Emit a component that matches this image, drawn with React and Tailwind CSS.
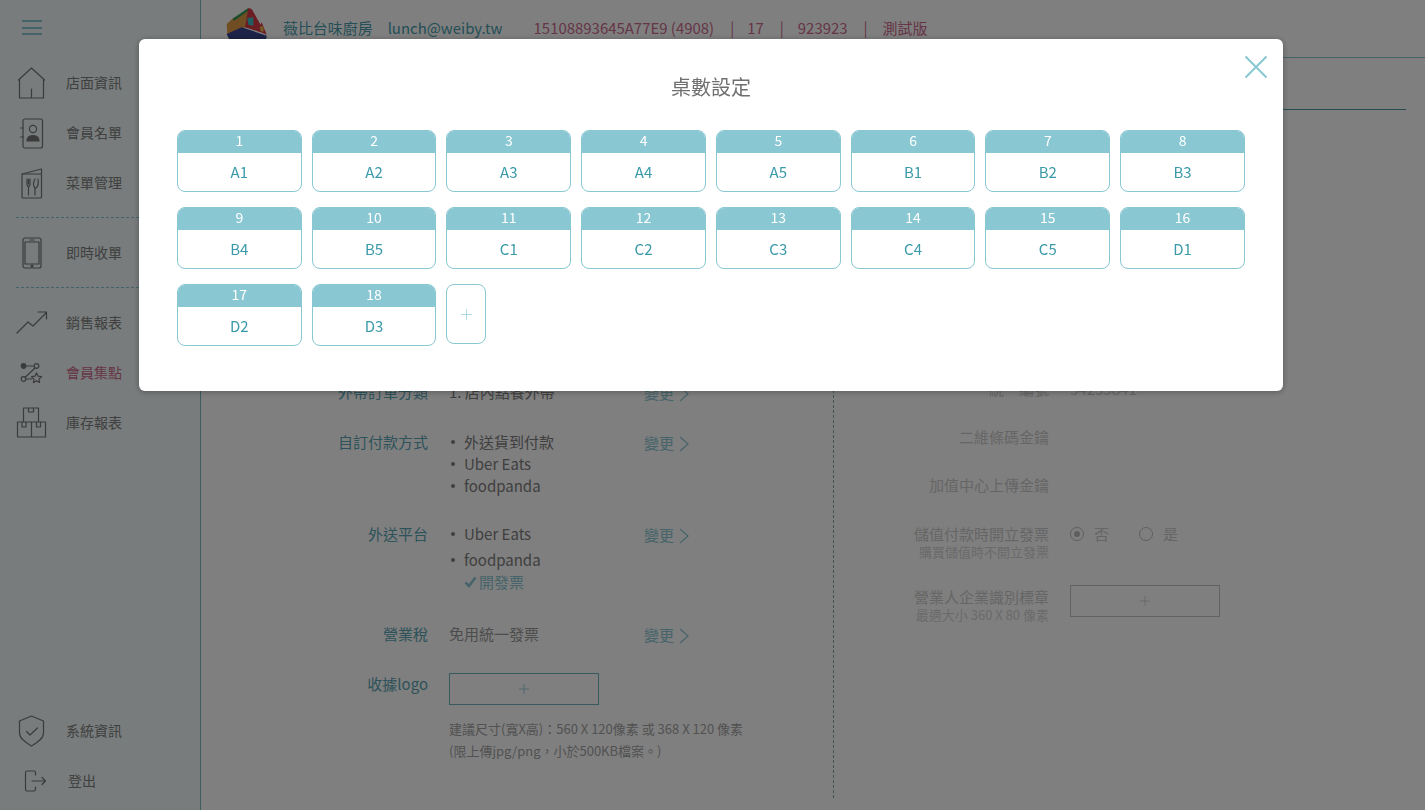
import { Plus } from "lucide-react";

const tables = ["A1","A2","A3","A4","A5","B1","B2","B3","B4","B5","C1","C2","C3","C4","C5","D1","D2","D3"];

const Svg = ({ w = 32, h = 32, children }) => (
  <svg width={w} height={h} viewBox={`0 0 ${w} ${h}`} fill="none" stroke="#777" strokeWidth="1.2" strokeLinejoin="round" strokeLinecap="round">
    {children}
  </svg>
);

const HomeIcon = () => (
  <Svg>
    <path d="M2.500 13 15.500 1l13 12M3.500 12v19h24V12M15.500 31v-9" />
  </Svg>
);
const ContactIcon = () => (
  <Svg>
    <rect x="7" y="2" width="19.500" height="29" rx="2" />
    <path d="M4.500 11h3M4.500 20h3" />
    <circle cx="17" cy="12" r="3.600" />
    <path d="M11 24c0-4 3-5.500 6-5.500s6 1.500 6 5.500z" fill="#777" />
  </Svg>
);
const MenuIcon = () => (
  <Svg>
    <path d="M6 7 25.500 2v5" />
    <rect x="6" y="7" width="19.500" height="24" rx="1" />
    <path d="M11 12v5c0 2 1 2.500 1.500 2.500V28M14 12v5c0 2-1 2.500-1.500 2.500M12.500 12v5M19 12c-2 3-2 7 0 9v7M22 12c.5 3 .5 7-2 9" />
  </Svg>
);
const PhoneIcon = () => (
  <Svg>
    <rect x="7" y="1" width="18" height="30" rx="2" />
    <path d="M9 5h14v22H9zM14 3h4" />
    <circle cx="16" cy="29" r="1" fill="#777" />
  </Svg>
);
const TrendIcon = () => (
  <Svg>
    <path d="M1 26 12 15l5 4L30 6M22 5h8.500v7" />
  </Svg>
);
const PointsIcon = () => (
  <Svg>
    <circle cx="7.500" cy="9" r="2.300" fill="#777" />
    <circle cx="20.500" cy="9" r="2.300" />
    <circle cx="7.500" cy="22" r="2.300" />
    <path d="M10 9h8M19 11 9.200 20.300M10 22h5.500M20.500 16l1.600 3.200 3.400.5-2.500 2.400.6 3.400-3.100-1.600-3.100 1.600.6-3.400-2.500-2.400 3.400-.5z" />
  </Svg>
);
const BoxIcon = () => (
  <Svg>
    <path d="M7.500 15V1h15v14M12.500 1v4h5V1M1.500 15h28v15h-28zM15.500 15v15M6 15v5h4v-5M20.500 15v5h4v-5" />
  </Svg>
);
const ShieldIcon = () => (
  <Svg>
    <path d="M15.500 1 27.500 6v12c0 6-7 10-12 13C10.500 28 3.500 24 3.500 18V6z" />
    <path d="m10.500 16.500 3.500 3.500 7.500-7" />
  </Svg>
);
const LogoutIcon = () => (
  <Svg w={28} h={28}>
    <path d="M17.500 8V5.500A1.500 1.500 0 0 0 16 4H9a1.500 1.500 0 0 0-1.500 1.500v17A1.500 1.500 0 0 0 9 24h7a1.500 1.500 0 0 0 1.500-1.500V20M14 14h13.500M24 10.500l3.500 3.500-3.500 3.500" />
  </Svg>
);

const ChevronLine = () => (
  <svg width="11" height="16" viewBox="0 0 11 16" fill="none" stroke="#8cc8d3" strokeWidth="1.2" className="ml-[5px] mt-[2px]">
    <path d="M1 1l8 7-8 7" />
  </svg>
);

const Logo = () => (
  <svg width="42" height="46" viewBox="0 0 42 46" className="shrink-0">
    <path d="M.7 16 7.300 10 22.300 2l-1.600 17.300-5 .7L1.300 26.700z" fill="#e09a45" />
    <path d="M6.700 10.700 22.300 0v2.700L8 12.700z" fill="#2f9a58" />
    <path d="M22.300 0l3.400 1 10 17.700L34 24 19 19.300z" fill="#d83a48" />
    <path d="M21.300 10l6-.7v8.400l-5-1z" fill="#3fc0c4" />
    <path d="M35.700 14.300l5 12.400-9.400-4z" fill="#d83a48" />
    <path d="M34 18.700l3.300-.7.300 5.700-3-.7z" fill="#e8c04a" />
    <path d="M.7 26 15.700 19.300l25 8.400L38 46H10z" fill="#3a4590" />
  </svg>
);

const SideItem = ({ icon, label, active, textClass = "ml-[16px]" }) => (
  <div className="flex h-[50px] items-center pl-[13px]">
    <span className="flex w-[37px] shrink-0 justify-center">{icon}</span>
    <span className={`-mt-[2px] text-[14px] ${textClass} ${active ? "text-[#cc6a8c]" : "text-[#808080]"}`}>{label}</span>
  </div>
);

const Sidebar = () => (
  <aside className="flex h-full w-[201px] shrink-0 flex-col border-r border-[#7ab8c4] bg-[#f0f8f8]">
    <div className="flex h-[58px] shrink-0 flex-col gap-[4.500px] pl-[22px] pt-[20px]">
      <span className="h-[2px] w-5 bg-[#89c7d2]" />
      <span className="h-[2px] w-5 bg-[#89c7d2]" />
      <span className="h-[2px] w-5 bg-[#89c7d2]" />
    </div>
    <SideItem icon={<HomeIcon />} label="店面資訊" />
    <SideItem icon={<ContactIcon />} label="會員名單" />
    <SideItem icon={<MenuIcon />} label="菜單管理" />
    <div className="mx-[16px] mb-[10px] mt-[9px] border-t border-dashed border-[#89c7d2]" />
    <SideItem icon={<PhoneIcon />} label="即時收單" />
    <div className="mx-[16px] mb-[10px] mt-[9px] border-t border-dashed border-[#89c7d2]" />
    <SideItem icon={<TrendIcon />} label="銷售報表" />
    <SideItem icon={<PointsIcon />} label="會員集點" active />
    <SideItem icon={<BoxIcon />} label="庫存報表" />
    <div className="mt-auto pb-[4px]">
      <SideItem icon={<ShieldIcon />} label="系統資訊" />
      <SideItem icon={<LogoutIcon />} label="登出" textClass="ml-[18px]" />
    </div>
  </aside>
);

const Divider = ({ className }) => <span className={`text-[#cc6a8c] ${className}`}>|</span>;

const Header = () => (
  <header className="flex h-[58px] shrink-0 items-start border-b border-[#89c7d2] pl-[25px] pt-[8px] text-[14.950px]">
    <Logo />
    <div className="flex h-[40px] items-center">
      <span className="ml-[15px] text-[#4a9dac]">薇比台味廚房</span>
      <span className="ml-[15px] text-[#4a9dac]">lunch@weiby.tw</span>
      <span className="ml-[31px] text-[#cc6a8c]">15108893645A77E9 (4908)</span>
      <Divider className="ml-[16px] mr-[13px]" />
      <span className="text-[#cc6a8c]">17</span>
      <Divider className="ml-[16px] mr-[14px]" />
      <span className="text-[#cc6a8c]">923923</span>
      <Divider className="ml-[16px] mr-[15px]" />
      <span className="text-[#cc6a8c]">測試版</span>
    </div>
  </header>
);

const ChangeLink = () => (
  <span className="flex h-[22px] items-center pt-[2px] text-[15px] text-[#8cc8d3]">
    變更
    <ChevronLine />
  </span>
);

const FormRow = ({ label, className = "", children, link = true }) => (
  <div className={`flex items-start ${className}`}>
    <div className="w-[227px] shrink-0 text-right text-[15px] leading-[22px] text-[#5aa5b3]">{label}</div>
    <div className="ml-[21px] w-[195px] shrink-0 text-[15px] leading-[22px] text-[#808080]">{children}</div>
    {link && <ChangeLink />}
  </div>
);

const Bullet = ({ children }) => (
  <div className="flex items-center pl-[2px]">
    <span className="mr-[9px] h-[4px] w-[4px] rounded-full bg-[#808080]" />
    {children}
  </div>
);

const UploadBox = ({ border, plus }) => (
  <div className={`flex h-[32px] w-[150px] items-center justify-center border ${border}`}>
    <Plus size={16} strokeWidth={1.2} className={plus} />
  </div>
);

const LeftColumn = () => (
  <div className="h-[688px] w-[633px] shrink-0 border-r border-dashed border-[#89a9ae] pt-[271px]">
    <FormRow label="外帶訂單分類">1. 店內點餐外帶</FormRow>
    <FormRow label="自訂付款方式" className="mt-[28px]">
      <Bullet>外送貨到付款</Bullet>
      <Bullet>Uber Eats</Bullet>
      <Bullet>foodpanda</Bullet>
    </FormRow>
    <FormRow label="外送平台" className="mt-[26px]">
      <Bullet>Uber Eats</Bullet>
      <div className="mt-[4px]">
        <Bullet>foodpanda</Bullet>
      </div>
      <div className="flex items-center pl-[15px] text-[#8cc8d3]">
        <svg width="13" height="12" viewBox="0 0 13 12" fill="none" stroke="#8cc8d3" strokeWidth="2.600">
          <path d="M1.500 6.500 5 10l6.500-8.500" />
        </svg>
        <span className="ml-[2px]">開發票</span>
      </div>
    </FormRow>
    <FormRow label="營業稅" className="mt-[30px]">
      <span className="text-[#999]">免用統一發票</span>
    </FormRow>
    <FormRow label="收據logo" className="mt-[28px]" link={false}>
      <UploadBox border="border-[#6fb1bd]" plus="text-[#8cc8d3]" />
    </FormRow>
    <div className="ml-[248px] mt-[13px] text-[13px] leading-[22px] text-[#a3a3a3]">
      <div>建議尺寸(寬X高)：560 X 120像素 或 368 X 120 像素</div>
      <div>(限上傳jpg/png，小於500KB檔案。)</div>
    </div>
  </div>
);

const RightLabel = ({ main, sub }) => (
  <div className="w-[215px] shrink-0 text-right text-[#cccccc]">
    <div className="text-[15px] leading-[22px]">{main}</div>
    {sub && <div className="-mt-[3px] text-[13px] leading-[20px] text-[#d4d4d4]">{sub}</div>}
  </div>
);

const Radio = ({ checked, label, className = "" }) => (
  <div className={`flex items-center ${className}`}>
    <span className="flex h-[14px] w-[14px] items-center justify-center rounded-full border border-[#bdbdbd]">
      {checked && <span className="h-[6px] w-[6px] rounded-full bg-[#bdbdbd]" />}
    </span>
    <span className="ml-[10px] text-[15px] leading-[22px] text-[#cccccc]">{label}</span>
  </div>
);

const RightColumn = () => (
  <div className="flex-1 pt-[268px]">
    <div className="flex">
      <RightLabel main="統一編號" />
      <div className="ml-[21px] text-[15px] leading-[22px] text-[#cccccc]">54235841</div>
    </div>
    <div className="mt-[26px]"><RightLabel main="二維條碼金鑰" /></div>
    <div className="mt-[26px]"><RightLabel main="加值中心上傳金鑰" /></div>
    <div className="mt-[27px] flex">
      <RightLabel main="儲值付款時開立發票" sub="購買儲值時不開立發票" />
      <div className="ml-[21px] flex h-[22px]">
        <Radio checked label="否" />
        <Radio label="是" className="ml-[30px]" />
      </div>
    </div>
    <div className="mt-[24px] flex">
      <RightLabel main="營業人企業識別標章" sub="最適大小 360 X 80 像素" />
      <div className="ml-[21px] -mt-[1px]">
        <UploadBox border="border-[#c4c4c4]" plus="text-[#cccccc]" />
      </div>
    </div>
  </div>
);

const TableCard = ({ index, name }) => (
  <div className="h-[62px] overflow-hidden rounded-[8px] border border-[#89c7d2]">
    <div className="-mx-px -mt-px flex h-[23px] items-center justify-center bg-[#89c7d2] pb-[2px] text-[14px] text-white">{index}</div>
    <div className="flex h-[38px] items-center justify-center text-[15px] text-[#3b9aa9]">{name}</div>
  </div>
);

const TableModal = () => (
  <div className="fixed inset-0 bg-black/50">
    <div className="absolute left-[139px] top-[39px] h-[352px] w-[1144px] rounded-[6px] bg-white pl-[37.900px] pr-[38.100px] pt-[33px] shadow-[0_1px_6px_rgba(0,0,0,0.3)]">
      <svg width="24" height="24" viewBox="0 0 24 24" className="absolute right-[15px] top-[16px]" fill="none" stroke="#89c7d2" strokeWidth="2">
        <path d="M1.500 1.500 22.500 22.500M22.500 1.500 1.500 22.500" />
      </svg>
      <h2 className="h-[30px] text-center text-[20px] font-normal leading-[30px] text-[#707070]">桌數設定</h2>
      <div className="mt-[28px] grid grid-cols-8 gap-x-[10px] gap-y-[15px]">
        {tables.map((name, i) => (
          <TableCard key={name} index={i + 1} name={name} />
        ))}
        <div className="flex h-[60px] w-[40px] items-center justify-center rounded-[8px] border border-[#89c7d2]">
          <Plus size={17} strokeWidth={1.2} className="text-[#a0d6df]" />
        </div>
      </div>
    </div>
  </div>
);

export default function App() {
  return (
    <div className="flex h-screen overflow-hidden bg-white font-['Noto_Sans_CJK_TC','Noto_Sans',sans-serif]">
      <Sidebar />
      <main className="flex min-w-0 flex-1 flex-col">
        <Header />
        <div className="mr-[19px] h-[52px] shrink-0 border-b border-[#4f9aa3]" />
        <div className="flex">
          <LeftColumn />
          <RightColumn />
        </div>
      </main>
      <TableModal />
    </div>
  );
}
